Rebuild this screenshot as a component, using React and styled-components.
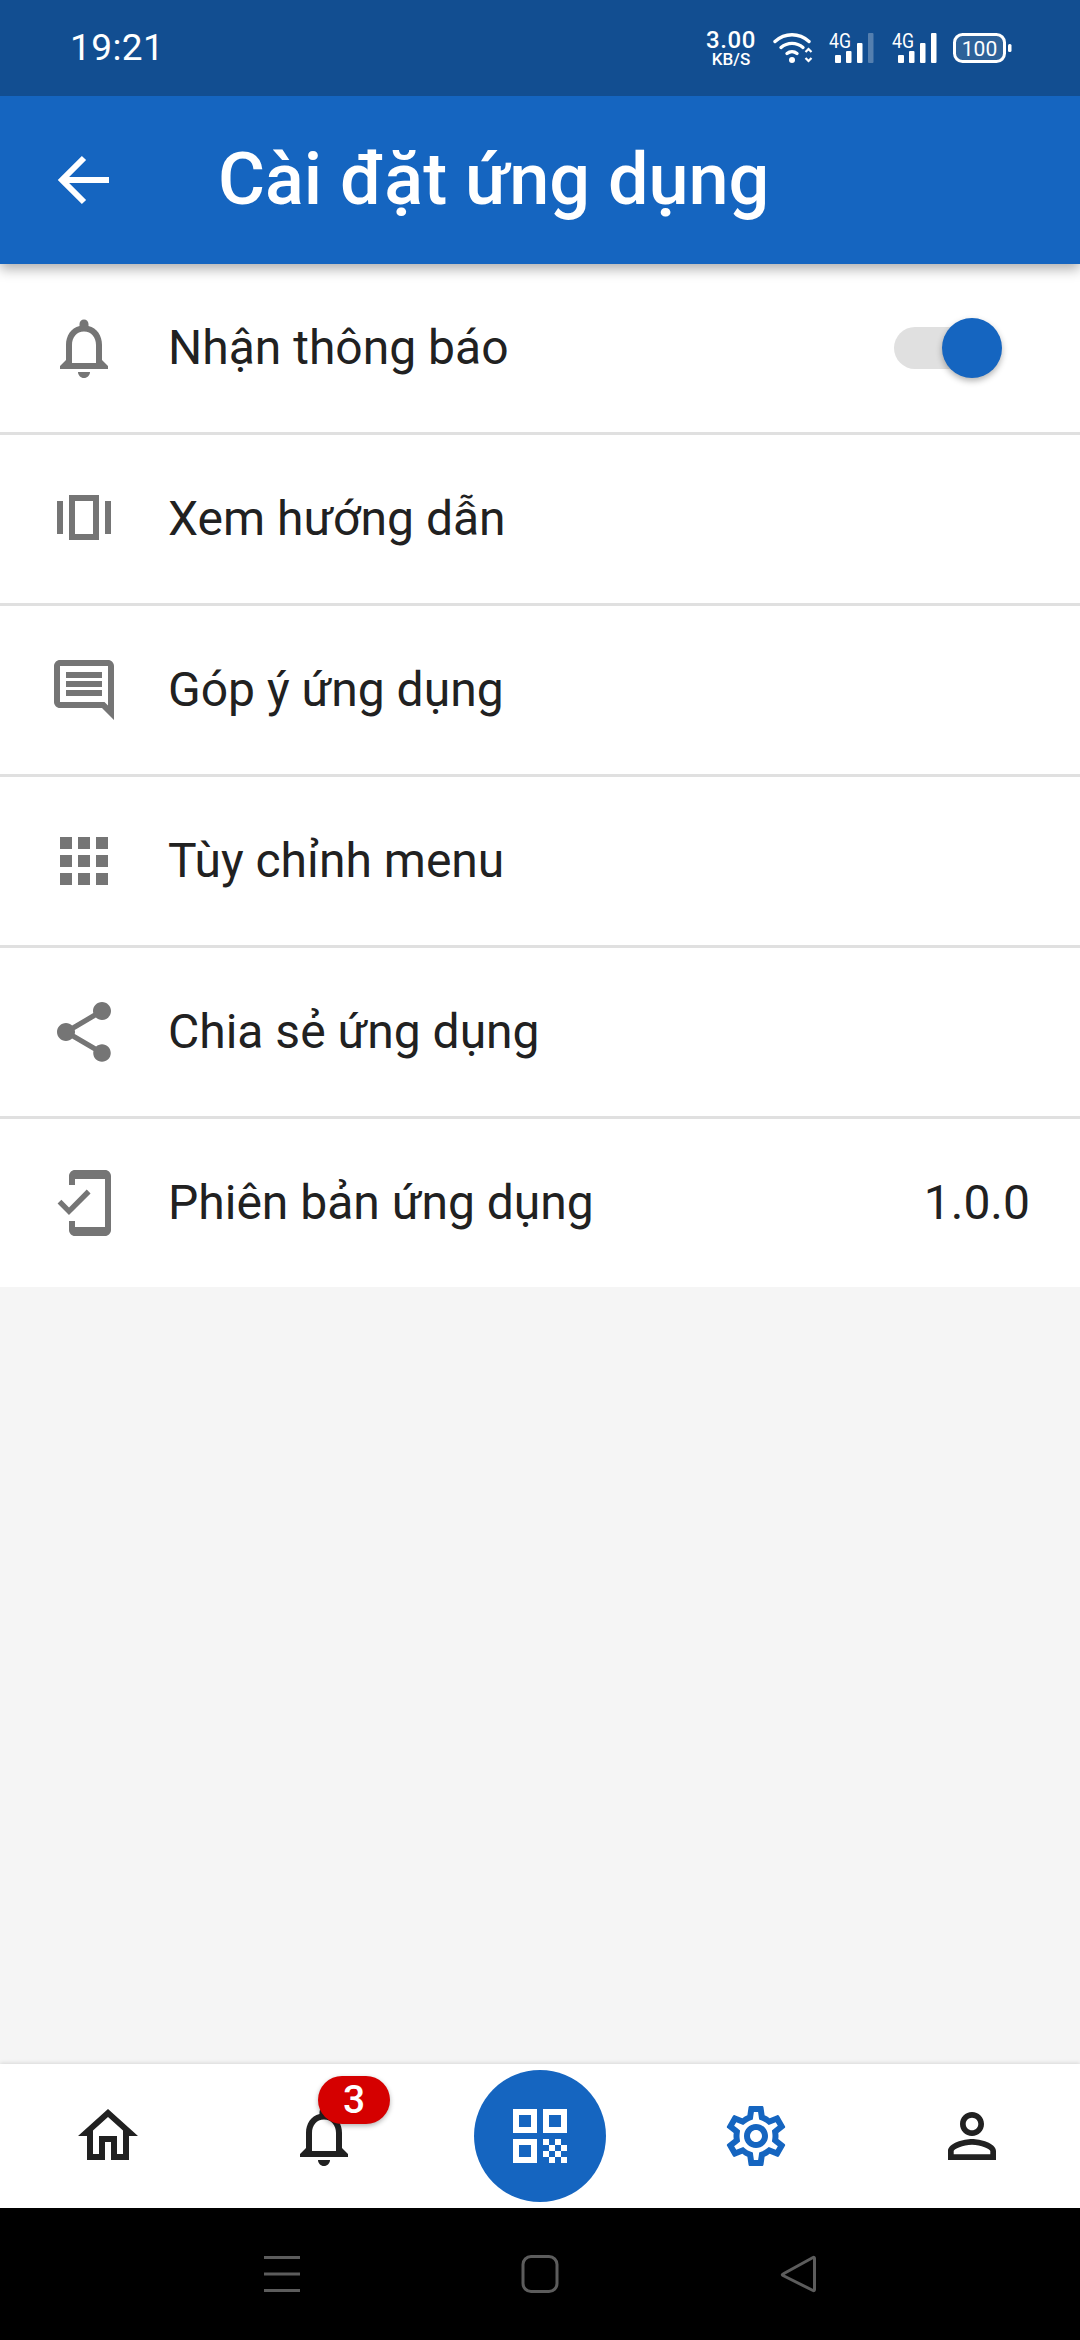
import React from 'react';
import styled, { createGlobalStyle } from 'styled-components';

const Global = createGlobalStyle`
  html, body { margin: 0; padding: 0; background: #000; }
  body { font-family: Roboto, "Noto Sans", sans-serif; }
  * { box-sizing: border-box; }
`;

const Screen = styled.div`
  width: 1080px; height: 2340px; display: flex; flex-direction: column; background: #f5f5f5; overflow: hidden;
`;
const StatusBar = styled.div`
  height: 96px; flex: none; background: #124e91; color: #fff; display: flex; align-items: center; justify-content: space-between;
  padding: 0 67px 0 70px; position: relative; z-index: 2;
`;
const Clock = styled.span`
  font-size: 37px; font-weight: 400; letter-spacing: 0.4px; line-height: 1; margin-top: -1px;
`;
const StatusIcons = styled.div`
  display: flex; align-items: flex-start; height: 96px; width: 308px; flex: none; padding-top: 27px;
`;
const Speed = styled.div`
  width: 52px; flex: none; margin: 2px 16px 0 0; display: flex; flex-direction: column; align-items: center; font-weight: 500;
`;
const SpeedValue = styled.span`font-size: 24px; letter-spacing: 0.6px; line-height: 22px;`;
const SpeedUnit = styled.span`font-size: 17px; line-height: 17px;`;
const StatusGlyph = styled.svg`
  flex: none; margin-right: ${p => p.$gap || 0}px;
`;
const AppBar = styled.header`
  height: 168px; flex: none; background: #1565c0; color: #fff; display: flex; align-items: center; padding-left: 48px;
  box-shadow: 0 5px 12px rgba(0,0,0,.32); position: relative; z-index: 1;
`;
const BackButton = styled.div`
  width: 72px; height: 72px; margin-right: 98px; display: flex;
`;
const Title = styled.h1`
  margin: 0; font-size: 72px; font-weight: 500; line-height: 1.2; color: #fff;
`;
const List = styled.div`background: #fff; display: flex; flex-direction: column;`;
const Row = styled.div`
  height: ${p => (p.$last ? 168 : 171)}px; display: flex; align-items: center; padding: 0 50px 0 48px; background: #fff;
  border-bottom: ${p => (p.$last ? 'none' : '3px solid #e0e0e0')};
`;
const RowIcon = styled.svg`
  width: 72px; height: 72px; fill: #757575; flex: none; margin-right: 48px;
`;
const RowLabel = styled.span`
  font-size: 48px; line-height: 1.2; color: #212121; flex: 1;
`;
const RowValue = styled.span`
  font-size: 48px; line-height: 1.2; color: #212121;
`;
const SwitchTrack = styled.div`
  width: 90px; height: 42px; border-radius: 21px; background: #e0e0e0; position: relative; margin-right: 46px;
`;
const SwitchThumb = styled.div`
  position: absolute; left: 48px; top: -9px; width: 60px; height: 60px; border-radius: 50%; background: #1565c0;
  box-shadow: 0 3px 6px rgba(0,0,0,.3);
`;
const Spacer = styled.div`flex: 1;`;
const BottomNav = styled.nav`
  height: 144px; flex: none; background: #fff; display: grid; grid-template-columns: repeat(5, 216px);
  box-shadow: 0 -1px 4px rgba(0,0,0,.12); position: relative;
`;
const NavItem = styled.div`
  display: flex; align-items: center; justify-content: center; position: relative;
`;
const NavIcon = styled.svg`
  width: 72px; height: 72px; fill: ${p => p.$color || '#212121'};
`;
const Badge = styled.span`
  position: absolute; left: 102px; top: 12px; width: 72px; height: 48px; border-radius: 24px; background: #d50000; color: #fff;
  display: flex; align-items: center; justify-content: center; font-size: 39px; font-weight: 500; line-height: 48px;
  box-shadow: 0 2px 5px rgba(0,0,0,.3);
`;
const QrCircle = styled.div`
  width: 132px; height: 132px; border-radius: 50%; background: #1565c0; display: flex; align-items: center; justify-content: center;
`;
const SystemBar = styled.div`
  height: 132px; flex: none; background: #000; display: grid; grid-template-columns: repeat(3, 258px); justify-content: center; align-items: center;
`;
const SystemButton = styled.svg`
  width: 40px; height: 40px; justify-self: center; fill: none; stroke: #5c5c5c; stroke-width: 3;
`;

const Signal = ({ dim, gap }) => (
  <StatusGlyph $gap={gap} width="46" height="38" viewBox="0 0 46 38">
    <text x="0" y="21" fill="#fff" fontFamily="Roboto, sans-serif" fontSize="20" textLength="22" lengthAdjust="spacingAndGlyphs">4G</text>
    <rect x="6" y="28" width="6" height="8" rx="1" fill="#fff" />
    <rect x="17" y="24" width="5.500" height="12" rx="1" fill="#fff" />
    <rect x="28" y="16" width="5.500" height="20" rx="1" fill="#fff" />
    <rect x="39" y="6" width="5.500" height="30" rx="1" fill="#fff" opacity={dim ? 0.28 : 1} />
  </StatusGlyph>
);

const BELL = 'M12 22c1.1 0 2-.9 2-2h-4c0 1.1.9 2 2 2zm6-6v-5c0-3.07-1.63-5.64-4.5-6.32V4c0-.83-.67-1.5-1.5-1.5s-1.5.67-1.5 1.5v.68C7.64 5.36 6 7.92 6 11v5l-2 2v1h16v-1l-2-2zm-2 1H8v-6c0-2.48 1.51-4.5 4-4.5s4 2.02 4 4.5v6z';

const rows = [
  { label: 'Nhận thông báo', d: BELL, toggle: true },
  { label: 'Xem hướng dẫn', d: 'M3 6h2v11H3zM19 6h2v11h-2zM7 4h10v15H7V4zm2 2v11h6V6H9z' },
  { label: 'Góp ý ứng dụng', d: 'M20 17.17L18.83 16H4V4h16v13.17zM20 2H4c-1.1 0-2 .9-2 2v12c0 1.1.9 2 2 2h14l4 4V4c0-1.1-.9-2-2-2zM6 12h12v2H6zm0-3h12v2H6zm0-3h12v2H6z' },
  { label: 'Tùy chỉnh menu', d: 'M4 8h4V4H4v4zm6 12h4v-4h-4v4zm-6 0h4v-4H4v4zm0-6h4v-4H4v4zm6 0h4v-4h-4v4zm6-10v4h4V4h-4zm-6 4h4V4h-4v4zm6 6h4v-4h-4v4zm0 6h4v-4h-4v4z' },
  { label: 'Chia sẻ ứng dụng', d: 'M18 16.08c-.76 0-1.44.3-1.96.77L8.91 12.7c.05-.23.09-.46.09-.7s-.04-.47-.09-.7l7.05-4.11c.54.5 1.25.81 2.04.81 1.66 0 3-1.34 3-3s-1.34-3-3-3-3 1.34-3 3c0 .24.04.47.09.7L8.04 9.81C7.5 9.31 6.79 9 6 9c-1.66 0-3 1.34-3 3s1.34 3 3 3c.79 0 1.5-.31 2.04-.81l7.12 4.16c-.05.21-.08.43-.08.65 0 1.61 1.31 2.92 2.92 2.92 1.61 0 2.92-1.31 2.92-2.92s-1.31-2.92-2.92-2.92z' },
  { label: 'Phiên bản ứng dụng', d: 'M19 1H9c-1.1 0-2 .9-2 2v3h2V4h10v16H9v-2H7v3c0 1.1.9 2 2 2h10c1.1 0 2-.9 2-2V3c0-1.1-.9-2-2-2zM7.01 13.47l-2.55-2.55-1.27 1.27L7 16l7.19-7.19-1.27-1.27z', value: '1.0.0' },
];

export default function App() {
  return (
    <Screen>
      <Global />
      <StatusBar>
        <Clock>19:21</Clock>
        <StatusIcons>
          <Speed>
            <SpeedValue>3.00</SpeedValue>
            <SpeedUnit>KB/S</SpeedUnit>
          </Speed>
          <StatusGlyph $gap={16} width="40" height="38" viewBox="0 0 40 38">
            <g fill="none" stroke="#fff" strokeWidth="3.400" strokeLinecap="round">
              <path d="M2 14.500C12 5.500 26 5.500 36 14.500" />
              <path d="M8 20.500c6.500-5.500 15.500-5.500 22 0" />
              <path d="M14 26.500c3-2.500 7-2.500 10 0" />
            </g>
            <circle cx="19" cy="33" r="3" fill="#fff" />
            <path d="M32.500 25l3-3 3 3M32.500 31l3 3 3-3" fill="none" stroke="#fff" strokeWidth="2.200" />
          </StatusGlyph>
          <Signal dim gap={17} />
          <Signal gap={15} />
          <StatusGlyph width="60" height="38" viewBox="0 0 60 38">
            <rect x="1.500" y="7.500" width="50" height="27" rx="8" fill="#2e6299" stroke="#fff" strokeWidth="3" />
            <rect x="55" y="17" width="3.500" height="8" rx="1.500" fill="#fff" />
            <text x="26.500" y="28.500" textAnchor="middle" fill="#fff" fontFamily="Roboto, sans-serif" fontSize="21">100</text>
          </StatusGlyph>
        </StatusIcons>
      </StatusBar>

      <AppBar>
        <BackButton>
          <svg width="72" height="72" viewBox="0 0 72 72" fill="none" stroke="#fff" strokeWidth="6">
            <path d="M61 36H16M36 14L14 36l22 22" />
          </svg>
        </BackButton>
        <Title>Cài đặt ứng dụng</Title>
      </AppBar>

      <List>
        {rows.map((r, i) => (
          <Row key={r.label} $last={i === rows.length - 1}>
            <RowIcon viewBox="0 0 24 24"><path d={r.d} fillRule="evenodd" /></RowIcon>
            <RowLabel>{r.label}</RowLabel>
            {r.toggle && <SwitchTrack><SwitchThumb /></SwitchTrack>}
            {r.value && <RowValue>{r.value}</RowValue>}
          </Row>
        ))}
      </List>

      <Spacer />

      <BottomNav>
        <NavItem>
          <NavIcon viewBox="0 0 24 24">
            <path fillRule="evenodd" d="M12 3L2 12h3v8h6v-6h2v6h6v-8h3L12 3zm0 2.700l5 4.500V18h-2v-6H9v6H7v-7.800l5-4.500z" />
          </NavIcon>
        </NavItem>
        <NavItem>
          <NavIcon viewBox="0 0 24 24"><path d={BELL} /></NavIcon>
          <Badge>3</Badge>
        </NavItem>
        <NavItem>
          <QrCircle>
            <NavIcon viewBox="0 0 24 24" $color="#fff">
              <path d="M3 11h8V3H3v8zm2-6h4v4H5V5zM3 21h8v-8H3v8zm2-6h4v4H5v-4zM13 3v8h8V3h-8zm6 6h-4V5h4v4zM19 19h2v2h-2zM13 13h2v2h-2zM15 15h2v2h-2zM13 17h2v2h-2zM15 19h2v2h-2zM17 17h2v2h-2zM17 13h2v2h-2zM19 15h2v2h-2z" />
            </NavIcon>
          </QrCircle>
        </NavItem>
        <NavItem>
          <NavIcon viewBox="0 0 24 24" $color="#1565c0">
            <path d="M19.43 12.98c.04-.32.07-.64.07-.98 0-.34-.03-.66-.07-.98l2.11-1.65c.19-.15.24-.42.12-.64l-2-3.46c-.09-.16-.26-.25-.44-.25-.06 0-.12.01-.17.03l-2.49 1c-.52-.4-1.08-.73-1.69-.98l-.38-2.65C14.46 2.18 14.25 2 14 2h-4c-.25 0-.46.18-.49.42l-.38 2.65c-.61.25-1.17.59-1.69.98l-2.49-1c-.06-.02-.12-.03-.18-.03-.17 0-.34.09-.43.25l-2 3.46c-.13.22-.07.49.12.64l2.11 1.65c-.04.32-.07.65-.07.98 0 .33.03.66.07.98l-2.11 1.65c-.19.15-.24.42-.12.64l2 3.46c.09.16.26.25.44.25.06 0 .12-.01.17-.03l2.49-1c.52.4 1.08.73 1.69.98l.38 2.65c.03.24.24.42.49.42h4c.25 0 .46-.18.49-.42l.38-2.65c.61-.25 1.17-.59 1.69-.98l2.49 1c.06.02.12.03.18.03.17 0 .34-.09.43-.25l2-3.46c.12-.22.07-.49-.12-.64l-2.11-1.65zm-1.98-1.71c.04.31.05.52.05.73 0 .21-.02.43-.05.73l-.14 1.13.89.7 1.08.84-.7 1.21-1.27-.51-1.04-.42-.9.68c-.43.32-.84.56-1.25.73l-1.06.43-.16 1.13-.2 1.35h-1.4l-.19-1.35-.16-1.13-1.06-.43c-.43-.18-.83-.41-1.23-.71l-.91-.7-1.06.43-1.27.51-.7-1.21 1.08-.84.89-.7-.14-1.13c-.03-.31-.05-.54-.05-.74s.02-.43.05-.73l.14-1.13-.89-.7-1.08-.84.7-1.21 1.27.51 1.04.42.9-.68c.43-.32.84-.56 1.25-.73l1.06-.43.16-1.13.2-1.35h1.39l.19 1.35.16 1.13 1.06.43c.43.18.83.41 1.23.71l.91.7 1.06-.43 1.27-.51.7 1.21-1.07.85-.89.7.14 1.13zM12 8c-2.21 0-4 1.79-4 4s1.79 4 4 4 4-1.79 4-4-1.79-4-4-4zm0 6c-1.1 0-2-.9-2-2s.9-2 2-2 2 .9 2 2-.9 2-2 2z" />
          </NavIcon>
        </NavItem>
        <NavItem>
          <NavIcon viewBox="0 0 24 24">
            <path d="M12 5.900c1.160 0 2.100.940 2.100 2.100s-.940 2.100-2.100 2.100S9.900 9.160 9.900 8s.940-2.100 2.100-2.100m0 9c2.970 0 6.100 1.460 6.100 2.100v1.100H5.900V17c0-.640 3.130-2.100 6.100-2.100M12 4C9.790 4 8 5.790 8 8s1.790 4 4 4 4-1.790 4-4-1.790-4-4-4zm0 9c-2.670 0-8 1.340-8 4v3h16v-3c0-2.660-5.330-4-8-4z" />
          </NavIcon>
        </NavItem>
      </BottomNav>

      <SystemBar>
        <SystemButton viewBox="0 0 40 40"><path d="M2 3.500h36M2 20h36M2 36.500h36" /></SystemButton>
        <SystemButton viewBox="0 0 40 40"><rect x="3" y="2.500" width="34" height="35" rx="8" /></SystemButton>
        <SystemButton viewBox="0 0 40 40"><path d="M5 20L35 3.500c1-.5 1.500 0 1.500 1v31c0 1-.5 1.500-1.500 1L5 21.500c-1-.7-1-1 0-1.500z" strokeLinejoin="round" /></SystemButton>
      </SystemBar>
    </Screen>
  );
}
